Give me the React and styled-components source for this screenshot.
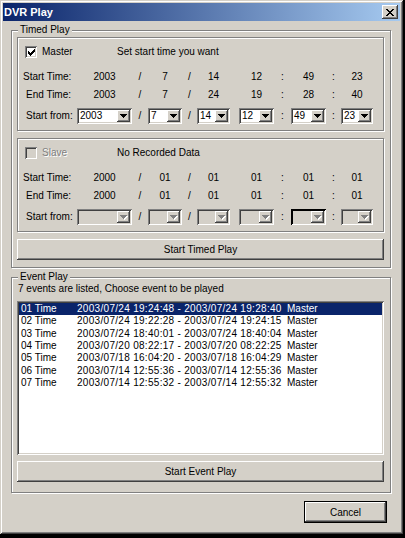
import React from "react";
import styled, { createGlobalStyle, css } from "styled-components";

const face = "#D4D0C8";

const GlobalStyle = createGlobalStyle`
  html, body {
    margin: 0;
    padding: 0;
    background: #000;
  }
  body {
    font-family: "Liberation Sans", Arial, sans-serif;
    font-size: 10px;
    color: #000;
  }
`;

// classic 3d borders
const raised = css`
  box-shadow: inset -1px -1px 0 #404040, inset 1px 1px 0 #fff,
    inset -2px -2px 0 #808080, inset 2px 2px 0 ${face};
`;
const sunken = css`
  box-shadow: inset 1px 1px 0 #808080, inset -1px -1px 0 #fff,
    inset 2px 2px 0 #404040, inset -2px -2px 0 ${face};
`;
const focusSunken = css`
  box-shadow: inset 1px 1px 0 #000, inset -1px -1px 0 #fff,
    inset 2px 2px 0 #000, inset -2px -2px 0 ${face};
`;
const etched = css`
  border: 1px solid #808080;
  box-shadow: inset 1px 1px 0 #fff, 1px 1px 0 #fff;
`;

const Window = styled.div`
  width: 403px;
  height: 534px;
  box-sizing: border-box;
  padding: 3px;
  background: ${face};
  box-shadow: inset 1px 1px 0 ${face}, inset -1px -1px 0 #404040,
    inset 2px 2px 0 #fff, inset -2px -2px 0 #808080;
  display: flex;
  flex-direction: column;
`;

const TitleBar = styled.div`
  height: 18px;
  display: flex;
  align-items: center;
  justify-content: space-between;
  padding-left: 1px;
  background: linear-gradient(to right, #0a246a, #a6caf0);
`;

const Title = styled.span`
  color: #fff;
  font-weight: bold;
  font-size: 11px;
`;

const CloseButton = styled.div`
  width: 16px;
  height: 14px;
  margin-right: 2px;
  background: ${face};
  ${raised};
  display: flex;
  align-items: center;
  justify-content: center;
`;

const Group = styled.div`
  margin: ${(p) => p.$top}px 9px 0 8px;
  ${etched};
  padding: 0 6px ${(p) => p.$bottom}px 5px;
  display: flex;
  flex-direction: column;
`;

const Legend = styled.span`
  align-self: flex-start;
  margin: -7px 0 0 1px;
  padding: 0 2px;
  line-height: 12px;
  background: ${face};
`;

const Panel = styled.div`
  ${etched};
  margin-top: ${(p) => p.$gap}px;
  padding: 8px 0 6px 5px;
  display: flex;
  flex-direction: column;
`;

const CheckRow = styled.div`
  height: 12px;
  display: flex;
  align-items: center;
`;

const CheckBox = styled.span`
  width: 12px;
  height: 12px;
  margin-left: 2px;
  box-sizing: border-box;
  background: ${(p) => (p.$disabled ? face : "#fff")};
  ${sunken};
  display: flex;
  align-items: center;
  justify-content: center;
`;

const CheckLabel = styled.span`
  width: 75px;
  margin-left: 5px;
  line-height: 12px;
  color: ${(p) => (p.$disabled ? "#808080" : "#000")};
  text-shadow: ${(p) => (p.$disabled ? "1px 1px 0 #fff" : "none")};
`;

const Note = styled.span`
  line-height: 12px;
`;

const TimeGrid = styled.div`
  display: grid;
  grid-template-columns: 54px 55px 16px 34px 15px 33px 9px 35px 17px 35px 15px 32px;
  align-items: center;
  height: ${(p) => (p.$combo ? 16 : 12)}px;
  margin-top: ${(p) => p.$gap}px;
  line-height: 12px;
`;

const RowLabel = styled.span`
  padding-left: ${(p) => p.$indent}px;
  white-space: nowrap;
`;

const Cell = styled.span`
  text-align: center;
  white-space: nowrap;
`;

const Combo = styled.div`
  height: 16px;
  box-sizing: border-box;
  padding: 2px;
  display: flex;
  background: ${(p) => (p.$disabled ? face : "#fff")};
  ${(p) => (p.$focus ? focusSunken : sunken)};
`;

const ComboText = styled.span`
  flex: 1;
  padding-left: 1px;
  line-height: 12px;
  overflow: hidden;
`;

const ComboArrow = styled.span`
  width: 13px;
  height: 12px;
  background: ${face};
  ${raised};
  display: flex;
  align-items: center;
  justify-content: center;
`;

const PushButton = styled.button`
  height: ${(p) => p.$h}px;
  margin-top: ${(p) => p.$gap}px;
  padding: 0;
  font-family: "Liberation Sans", Arial, sans-serif;
  font-size: 10px;
  color: #000;
  background: ${face};
  border: ${(p) => (p.$default ? "1px solid #000" : "0")};
  ${raised};
`;

const CancelButton = styled(PushButton)`
  width: 83px;
  align-self: flex-end;
  margin-right: 13px;
`;

const Caption = styled.div`
  margin-left: 1px;
  line-height: 12px;
`;

const ListBox = styled.div`
  margin-top: 6px;
  height: 154px;
  box-sizing: border-box;
  padding: 2px;
  background: #fff;
  ${sunken};
`;

const ListRow = styled.div`
  display: grid;
  grid-template-columns: 56px 210px auto;
  height: 12.33px;
  line-height: 12.33px;
  padding-left: 2px;
  white-space: nowrap;
  background: ${(p) => (p.$selected ? "#0a246a" : "transparent")};
  color: ${(p) => (p.$selected ? "#fff" : "#000")};
`;

const Range = styled.span`
  letter-spacing: 0.3px;
`;

const CloseGlyph = () => (
  <svg width="8" height="7" viewBox="0 0 8 7" shapeRendering="crispEdges">
    <path
      fill="#000"
      d="M0 0h2v1H0zM6 0h2v1H6zM1 1h2v1H1zM5 1h2v1H5zM2 2h4v1H2zM3 3h2v1H3zM2 4h4v1H2zM1 5h2v1H1zM5 5h2v1H5zM0 6h2v1H0zM6 6h2v1H6z"
    />
  </svg>
);

const CheckGlyph = () => (
  <svg width="7" height="7" viewBox="0 0 7 7" shapeRendering="crispEdges">
    <path
      fill="#000"
      d="M6 0h1v1H6zM5 1h2v1H5zM0 2h1v1H0zM4 2h3v1H4zM0 3h2v1H0zM3 3h3v1H3zM0 4h5v1H0zM1 5h3v1H1zM2 6h1v1H2z"
    />
  </svg>
);

const arrowPath = "M0 0h7v1H0zM1 1h5v1H1zM2 2h3v1H2zM3 3h1v1H3z";

const ArrowGlyph = ({ disabled }) => (
  <svg width="8" height="5" viewBox="0 0 8 5" shapeRendering="crispEdges">
    {disabled && <path fill="#fff" transform="translate(1 1)" d={arrowPath} />}
    <path fill={disabled ? "#808080" : "#000"} d={arrowPath} />
  </svg>
);

const DropDown = ({ value, disabled, focus }) => (
  <Combo $disabled={disabled} $focus={focus}>
    <ComboText>{value}</ComboText>
    <ComboArrow>
      <ArrowGlyph disabled={disabled} />
    </ComboArrow>
  </Combo>
);

const TimeRow = ({ label, indent, v, gap }) => (
  <TimeGrid $gap={gap}>
    <RowLabel $indent={indent}>{label}</RowLabel>
    <Cell>{v[0]}</Cell>
    <Cell>/</Cell>
    <Cell>{v[1]}</Cell>
    <Cell>/</Cell>
    <Cell>{v[2]}</Cell>
    <Cell />
    <Cell>{v[3]}</Cell>
    <Cell>:</Cell>
    <Cell>{v[4]}</Cell>
    <Cell>:</Cell>
    <Cell>{v[5]}</Cell>
  </TimeGrid>
);

const PickRow = ({ v, disabled, focusIndex }) => (
  <TimeGrid $combo $gap={7}>
    <RowLabel $indent={3}>Start from:</RowLabel>
    <DropDown value={v[0]} disabled={disabled} focus={focusIndex === 0} />
    <Cell>/</Cell>
    <DropDown value={v[1]} disabled={disabled} focus={focusIndex === 1} />
    <Cell>/</Cell>
    <DropDown value={v[2]} disabled={disabled} focus={focusIndex === 2} />
    <Cell />
    <DropDown value={v[3]} disabled={disabled} focus={focusIndex === 3} />
    <Cell>:</Cell>
    <DropDown value={v[4]} disabled={disabled} focus={focusIndex === 4} />
    <Cell>:</Cell>
    <DropDown value={v[5]} disabled={disabled} focus={focusIndex === 5} />
  </TimeGrid>
);

const ChannelPanel = ({ gap, name, note, checked, disabled, start, end, pick, focusIndex }) => (
  <Panel $gap={gap}>
    <CheckRow>
      <CheckBox $disabled={disabled}>{checked && <CheckGlyph />}</CheckBox>
      <CheckLabel $disabled={disabled}>{name}</CheckLabel>
      <Note>{note}</Note>
    </CheckRow>
    <TimeRow label="Start Time:" indent={0} v={start} gap={13} />
    <TimeRow label="End Time:" indent={3} v={end} gap={6} />
    <PickRow v={pick} disabled={disabled} focusIndex={focusIndex} />
  </Panel>
);

const events = [
  ["01 Time", "2003/07/24 19:24:48 - 2003/07/24 19:28:40"],
  ["02 Time", "2003/07/24 19:22:28 - 2003/07/24 19:24:15"],
  ["03 Time", "2003/07/24 18:40:01 - 2003/07/24 18:40:04"],
  ["04 Time", "2003/07/20 08:22:17 - 2003/07/20 08:22:25"],
  ["05 Time", "2003/07/18 16:04:20 - 2003/07/18 16:04:29"],
  ["06 Time", "2003/07/14 12:55:36 - 2003/07/14 12:55:36"],
  ["07 Time", "2003/07/14 12:55:32 - 2003/07/14 12:55:32"],
];

const App = () => {
  return (
    <>
      <GlobalStyle />
      <Window>
        <TitleBar>
          <Title>DVR Play</Title>
          <CloseButton>
            <CloseGlyph />
          </CloseButton>
        </TitleBar>

        <Group $top={9} $bottom={7}>
          <Legend>Timed Play</Legend>
          <ChannelPanel
            gap={1}
            name="Master"
            note="Set start time you want"
            checked
            start={["2003", "7", "14", "12", "49", "23"]}
            end={["2003", "7", "24", "19", "28", "40"]}
            pick={["2003", "7", "14", "12", "49", "23"]}
          />
          <ChannelPanel
            gap={7}
            name="Slave"
            note="No Recorded Data"
            disabled
            start={["2000", "01", "01", "01", "01", "01"]}
            end={["2000", "01", "01", "01", "01", "01"]}
            pick={["", "", "", "", "", ""]}
            focusIndex={4}
          />
          <PushButton $h={21} $gap={7}>Start Timed Play</PushButton>
        </Group>

        <Group $top={9} $bottom={10}>
          <Legend>Event Play</Legend>
          <Caption>7 events are listed, Choose event to be played</Caption>
          <ListBox>
            {events.map(([n, range], i) => (
              <ListRow key={n} $selected={i === 0}>
                <span>{n}</span>
                <Range>{range}</Range>
                <span>Master</span>
              </ListRow>
            ))}
          </ListBox>
          <PushButton $h={21} $gap={6}>Start Event Play</PushButton>
        </Group>

        <CancelButton $h={22} $gap={8} $default>
          Cancel
        </CancelButton>
      </Window>
    </>
  );
};

export default App;
